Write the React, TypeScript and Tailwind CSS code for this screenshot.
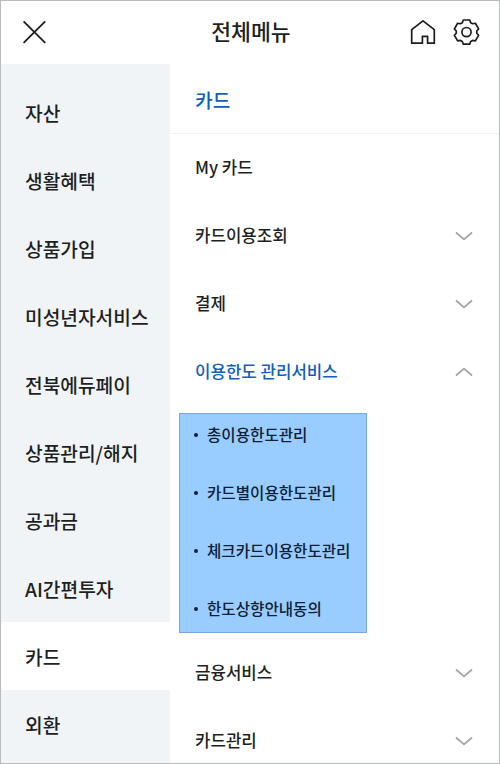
import { useState } from 'react'
import clsx from 'clsx'

const categories = [
  '자산',
  '생활혜택',
  '상품가입',
  '미성년자서비스',
  '전북에듀페이',
  '상품관리/해지',
  '공과금',
  'AI간편투자',
  '카드',
  '외환',
]

const menus = [
  { id: 'my', name: 'My 카드', expandable: false, children: [] },
  { id: 'usage', name: '카드이용조회', expandable: true, children: [] },
  { id: 'payment', name: '결제', expandable: true, children: [] },
  {
    id: 'limit',
    name: '이용한도 관리서비스',
    expandable: true,
    children: ['총이용한도관리', '카드별이용한도관리', '체크카드이용한도관리', '한도상향안내동의'],
  },
  { id: 'finance', name: '금융서비스', expandable: true, children: [] },
  { id: 'manage', name: '카드관리', expandable: true, children: [] },
]

function CloseIcon() {
  return (
    <svg width="24" height="24" viewBox="0 0 24 24" fill="none" stroke="#1b1c1f" strokeWidth="1.8">
      <path d="M1.6 1.4l21.6 21.4M23.2 1.4L1.6 22.8" />
    </svg>
  )
}

function HomeIcon() {
  return (
    <svg width="26" height="26" viewBox="0 0 26 26" fill="none" stroke="#1b1c1f" strokeWidth="1.7" strokeLinejoin="round">
      <path d="M1.7 10.6L13 1.8l11.3 8.8v13.6h-6.7v-6.9h-5.2v6.9H1.7z" />
    </svg>
  )
}

function GearIcon() {
  return (
    <svg width="28" height="28" viewBox="0 0 28 28" fill="none" stroke="#1b1c1f" strokeWidth="1.7" strokeLinejoin="round">
      <g transform="translate(.5 .1)">
        <path d="M10.8 1.9h6.4l1 2.7 1.85 1.05 2.8-.5 3.25 5.65-1.85 2.1v2.2l1.85 2.1-3.25 5.65-2.8-.5-1.85 1.05-1 2.7h-6.4l-1-2.7-1.85-1.05-2.8.5L1.9 17.2l1.85-2.1v-2.2L1.9 10.8l3.25-5.65 2.8.5L9.8 4.6z" />
        <circle cx="14" cy="14" r="4.6" />
      </g>
    </svg>
  )
}

function Chevron({ open }: { open: boolean }) {
  return (
    <svg
      width="18"
      height="10"
      viewBox="0 0 18 10"
      fill="none"
      stroke="#a3a3a3"
      strokeWidth="1.7"
      className={clsx(open && 'rotate-180')}
    >
      <path d="M1 1.5l8 6.8 8-6.8" />
    </svg>
  )
}

export default function App() {
  const [category, setCategory] = useState('카드')
  const [opened, setOpened] = useState<string | null>('limit')

  return (
    <div className="flex h-[764px] w-[500px] flex-col overflow-hidden border border-[#b9babc] bg-white font-['Noto_Sans_CJK_KR',sans-serif] font-medium text-[#1d1f22]">
      {/* Header */}
      <header className="grid h-[63px] shrink-0 grid-cols-3 items-center pr-[19px] pb-[2px] pl-[21px]">
        <button className="justify-self-start">
          <CloseIcon />
        </button>
        <h1 className="justify-self-center pb-[2px] text-[21.6px] leading-8">전체메뉴</h1>
        <div className="flex items-center gap-[16px] justify-self-end">
          <button>
            <HomeIcon />
          </button>
          <button>
            <GearIcon />
          </button>
        </div>
      </header>

      <div className="flex min-h-0 flex-1">
        {/* Categories */}
        <nav className="w-[169px] shrink-0 overflow-hidden bg-[#f0f4f7] pt-[14px]">
          {categories.map((name) => (
            <button
              key={name}
              onClick={() => setCategory(name)}
              className={clsx(
                'flex h-[68px] w-full items-center pt-[2px] pl-6 text-[19.2px] whitespace-nowrap',
                name === category && 'bg-white',
              )}
            >
              {name}
            </button>
          ))}
        </nav>

        {/* Menu of the selected category */}
        <main className="min-w-0 flex-1 overflow-hidden">
          <h2 className="flex h-[70px] items-center border-b border-[#f1f2f3] pt-[3px] pl-[25px] text-[19.2px] text-[#1260b8]">
            {category}
          </h2>
          {menus.map((menu) => {
            const open = menu.id === opened
            return (
              <section key={menu.id}>
                <button
                  onClick={() => setOpened(open ? null : menu.id)}
                  className={clsx(
                    'flex h-[68px] w-full items-center justify-between pr-[26px] pl-[25px] text-[16.8px]',
                    open && 'text-[#1260b8]',
                  )}
                >
                  {menu.name}
                  {menu.expandable && <Chevron open={open} />}
                </button>
                {open && menu.children.length > 0 && (
                  <ul className="mt-[7px] mb-[6px] ml-[9px] h-[220px] w-[188px] border border-[#79a9dc] bg-[#99ccff] pt-[7px] text-[15.6px] text-[#0e2036]">
                    {menu.children.map((child) => (
                      <li key={child} className="mb-[30px] flex h-7 items-center gap-[9px] pl-[14px] whitespace-nowrap">
                        <span className="size-1 rounded-full bg-[#0e2036]" />
                        {child}
                      </li>
                    ))}
                  </ul>
                )}
              </section>
            )
          })}
        </main>
      </div>
    </div>
  )
}
